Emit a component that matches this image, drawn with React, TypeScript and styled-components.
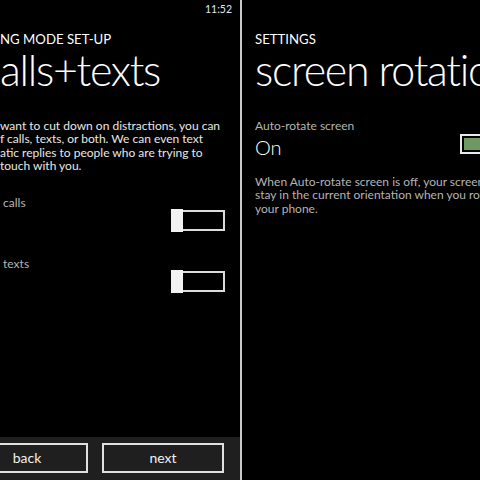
import React from 'react';
import styled, { createGlobalStyle } from 'styled-components';

const GlobalStyle = createGlobalStyle`
  html, body {
    margin: 0;
    padding: 0;
    background: #000;
  }
  body {
    font-family: Lato, "Open Sans", "Liberation Sans", sans-serif;
    color: #fff;
  }
`;

const Screen = styled.div`
  display: grid;
  grid-template-columns: 240px 2px 238px;
  width: 480px;
  height: 480px;
  background: #000;
`;

const Divider = styled.div`
  background: #c9c9c9;
`;

const Panel = styled.section<{ $inset: number }>`
  display: flex;
  flex-direction: column;
  overflow: hidden;
  height: 480px;
  padding-left: ${({ $inset }) => $inset}px;
`;

const StatusBar = styled.div`
  height: 18px;
  display: flex;
  align-items: center;
  justify-content: flex-end;
  padding-right: 8px;
  font-size: 10.5px;
  color: #e6e6e6;
`;

const AppTitle = styled.div`
  margin-top: 13px;
  font-size: 13.2px;
  line-height: 16px;
  font-weight: 400;
  letter-spacing: 0;
  white-space: nowrap;
`;

const PageTitle = styled.h1`
  margin: -1px 0 0;
  font-size: 43px;
  line-height: 48px;
  font-weight: 300;
  letter-spacing: -1.3px;
  white-space: nowrap;
`;

const Body = styled.p<{ $top: number; $dim?: boolean }>`
  margin: ${({ $top }) => $top}px 0 0;
  font-size: 12px;
  line-height: 13.3px;
  color: ${({ $dim }) => ($dim ? '#b4b4b4' : '#e8e8e8')};
  white-space: nowrap;
`;

const Label = styled.div<{ $top: number }>`
  margin-top: ${({ $top }) => $top}px;
  font-size: 12px;
  line-height: 16px;
  color: #b4b4b4;
  white-space: nowrap;
`;

const SwitchRow = styled.div`
  display: flex;
  justify-content: flex-end;
  padding-right: 15px;
  margin-top: -2px;
`;

const OffSwitch = styled.div`
  display: flex;
  align-items: center;
  width: 54px;
  height: 23px;
`;

const Thumb = styled.div`
  width: 12px;
  height: 23px;
  background: #f2f2f2;
`;

const Track = styled.div`
  flex: 1;
  height: 21px;
  box-sizing: border-box;
  border: 2px solid #dcdcdc;
  border-left: none;
`;

const OnRow = styled.div`
  display: flex;
  align-items: flex-start;
  justify-content: space-between;
  width: 262px;
  margin-top: 0;
  height: 22px;
`;

const OnValue = styled.span`
  font-size: 20px;
  line-height: 20px;
  font-weight: 300;
  padding-top: 3px;
`;

const OnSwitch = styled.div`
  width: 57px;
  height: 20px;
  box-sizing: border-box;
  border: 2px solid #e8e8e8;
  padding: 2px;
  background: #000;
`;

const OnFill = styled.div`
  height: 100%;
  background: #6e9962;
`;

const AppBar = styled.div`
  margin-top: auto;
  height: 43px;
  box-sizing: border-box;
  background: #1f1f1f;
  display: flex;
  gap: 14px;
  padding-top: 6px;
  margin-left: -34px;
`;

const BarButton = styled.button`
  width: 122px;
  height: 30px;
  box-sizing: border-box;
  border: 2px solid #e0e0e0;
  background: transparent;
  color: #f0f0f0;
  font-family: inherit;
  font-size: 14px;
  font-weight: 400;
  padding: 0 0 2px;
`;

export default function App() {
  return (
    <>
      <GlobalStyle />
      <Screen>
        <Panel $inset={0}>
          <StatusBar>11:52</StatusBar>
          <AppTitle>NG MODE SET-UP</AppTitle>
          <PageTitle>alls+texts</PageTitle>
          <Body $top={25}>
            want to cut down on distractions, you can
            <br />f calls, texts, or both. We can even text
            <br />
            atic replies to people who are trying to
            <br />
            touch with you.
          </Body>
          <Label $top={23}>&nbsp;calls</Label>
          <SwitchRow>
            <OffSwitch>
              <Thumb />
              <Track />
            </OffSwitch>
          </SwitchRow>
          <Label $top={24}>&nbsp;texts</Label>
          <SwitchRow>
            <OffSwitch>
              <Thumb />
              <Track />
            </OffSwitch>
          </SwitchRow>
          <AppBar>
            <BarButton>back</BarButton>
            <BarButton>next</BarButton>
          </AppBar>
        </Panel>
        <Divider />
        <Panel $inset={13}>
          <StatusBar />
          <AppTitle>SETTINGS</AppTitle>
          <PageTitle>screen rotation</PageTitle>
          <Label $top={24}>Auto-rotate screen</Label>
          <OnRow>
            <OnValue>On</OnValue>
            <OnSwitch>
              <OnFill />
            </OnSwitch>
          </OnRow>
          <Body $top={19} $dim>
            When Auto-rotate screen is off, your screen will
            <br />
            stay in the current orientation when you rotate
            <br />
            your phone.
          </Body>
        </Panel>
      </Screen>
    </>
  );
}
